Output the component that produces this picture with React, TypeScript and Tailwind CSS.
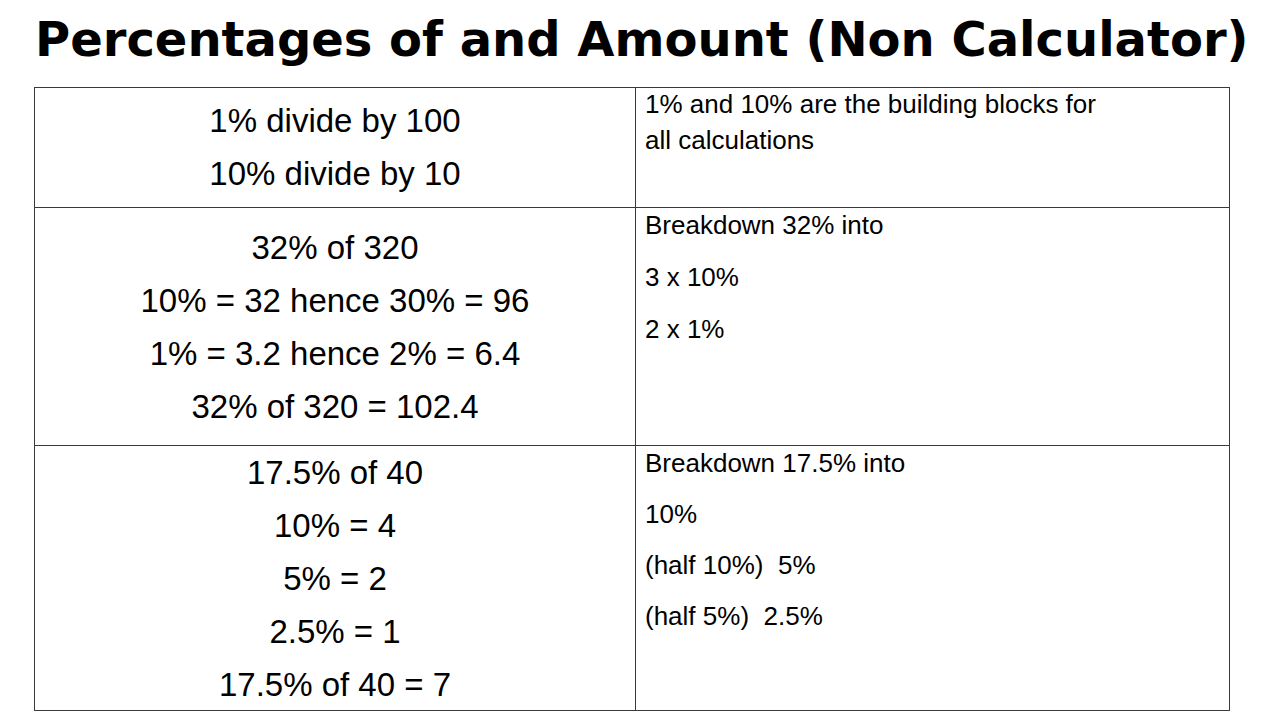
const rows = [
  {
    left: ["1% divide by 100", "10% divide by 10"],
    right: ["1% and 10% are the building blocks for", "all calculations"],
    height: "h-[119px]",
    leftPad: "pt-[6px]",
    rightGap: "leading-[36px]",
    rightPad: "-mt-[2px]",
  },
  {
    left: ["32% of 320", "10% = 32 hence 30% = 96", "1% = 3.2 hence 2% = 6.4", "32% of 320 = 102.4"],
    right: ["Breakdown 32% into", "3 x 10%", "2 x 1%"],
    height: "h-[238px]",
    leftPad: "pt-[13px]",
    rightGap: "leading-[52px]",
    rightPad: "-mt-[9px]",
  },
  {
    left: ["17.5% of 40", "10% = 4", "5% = 2", "2.5% = 1", "17.5% of 40 = 7"],
    right: ["Breakdown 17.5% into", "10%", "(half 10%)  5%", "(half 5%)  2.5%"],
    height: "h-[265px]",
    leftPad: "pt-0",
    rightGap: "leading-[51px]",
    rightPad: "-mt-[8px]",
  },
];

export default function App() {
  return (
    <div className="w-[1280px] h-[720px] bg-white overflow-hidden text-black">
      {/* Title */}
      <h1 className="h-[87px] pl-[35px] pt-[8px] font-['DejaVu_Sans',sans-serif] font-bold text-[48px] leading-[62px] whitespace-nowrap">
        Percentages of and Amount (Non Calculator)
      </h1>

      {/* Table */}
      <div className="ml-[34px] w-[1196px] border border-[#3a3a3a]">
        {rows.map((row, i) => (
          <div
            key={i}
            className={`grid grid-cols-[601px_1fr] ${row.height} ${i > 0 ? "border-t border-[#3a3a3a]" : ""}`}
          >
            <div
              className={`border-r border-[#3a3a3a] flex flex-col items-center ${row.leftPad} font-['Liberation_Sans',sans-serif] text-[33px] leading-[53px]`}
            >
              {row.left.map((t) => (
                <div key={t} className="whitespace-pre">{t}</div>
              ))}
            </div>
            <div
              className={`pl-[9px] ${row.rightPad} font-['Liberation_Sans',sans-serif] text-[26px] ${row.rightGap}`}
            >
              {row.right.map((t) => (
                <div key={t} className="whitespace-pre">{t}</div>
              ))}
            </div>
          </div>
        ))}
      </div>
    </div>
  );
}
